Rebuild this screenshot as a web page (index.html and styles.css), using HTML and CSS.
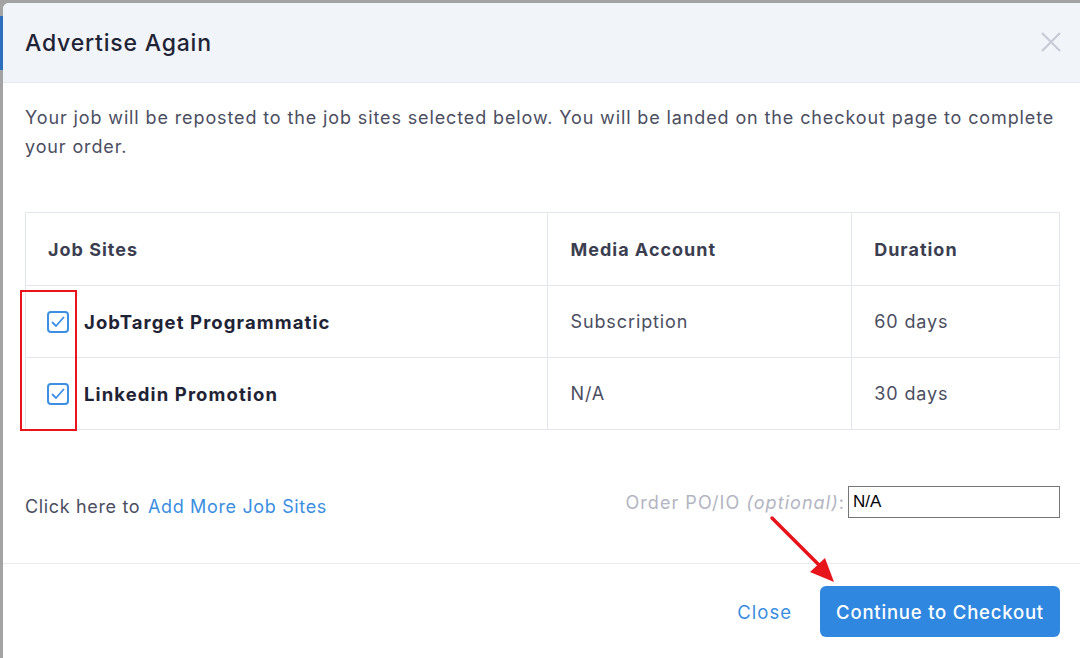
FILE: index.html
```html
<!DOCTYPE html>
<html>
<head>
<meta charset="utf-8">
<link rel="stylesheet" href="styles.css">
</head>
<body>
<div class="page-strip"></div>
<div class="modal">
  <div class="modal-header">
    <h2 class="modal-title">Advertise Again</h2>
    <span class="close-x">
      <svg width="22" height="22" viewBox="0 0 22 22"><path d="M2 2 L20 20 M20 2 L2 20" stroke="#c8cad6" stroke-width="2.2" fill="none"/></svg>
    </span>
  </div>
  <div class="modal-body">
    <p class="intro">Your job will be reposted to the job sites selected below. You will be landed on the checkout page to complete your order.</p>
    <table class="sites">
      <thead>
        <tr><th class="c1">Job Sites</th><th class="c2">Media Account</th><th class="c3">Duration</th></tr>
      </thead>
      <tbody>
        <tr>
          <td class="c1"><div class="site"><span class="cb"><svg width="18" height="18" viewBox="0 0 18 18"><path d="M3.5 9.5 L7 13 L14.5 4.5" stroke="#3d8fe4" stroke-width="1.8" fill="none" stroke-linecap="round" stroke-linejoin="round"/></svg></span><span class="site-name">JobTarget Programmatic</span></div></td>
          <td class="c2">Subscription</td>
          <td class="c3">60 days</td>
        </tr>
        <tr>
          <td class="c1"><div class="site"><span class="cb"><svg width="18" height="18" viewBox="0 0 18 18"><path d="M3.5 9.5 L7 13 L14.5 4.5" stroke="#3d8fe4" stroke-width="1.8" fill="none" stroke-linecap="round" stroke-linejoin="round"/></svg></span><span class="site-name">Linkedin Promotion</span></div></td>
          <td class="c2">N/A</td>
          <td class="c3">30 days</td>
        </tr>
      </tbody>
    </table>
    <div class="extra">
      <div class="add-more">Click here to <a class="link">Add More Job Sites</a></div>
      <div class="po"><label class="po-label">Order PO/IO <em>(optional)</em>:</label><input class="po-input" type="text" value="N/A"></div>
    </div>
  </div>
  <div class="modal-footer">
    <a class="close-link">Close</a>
    <button class="btn-primary">Continue to Checkout</button>
  </div>
</div>
<div class="red-box"></div>
<svg class="arrow" width="80" height="80" viewBox="0 0 80 80">
  <line x1="4" y1="4" x2="52" y2="52" stroke="#e8141c" stroke-width="3.5" stroke-linecap="round"/>
  <polygon points="66,68 42,58 57,44" fill="#e8141c"/>
</svg>
</body>
</html>
```
FILE: styles.css
```css
html, body {
  margin: 0;
  padding: 0;
}
body {
  width: 1080px;
  height: 658px;
  overflow: hidden;
  background: #a3a3a3;
  font-family: Inter, "Open Sans", sans-serif;
  position: relative;
}
.page-strip {
  position: absolute;
  left: 0;
  top: 16px;
  width: 3px;
  height: 54px;
  background: #2d6fbf;
}
.modal {
  margin: 3px 0 0 3px;
  width: 1077px;
  height: 655px;
  overflow: hidden;
  background: #ffffff;
  border-radius: 6px 0 0 0;
}
.modal-header {
  height: 79px;
  background: #f1f4f8;
  border-bottom: 1px solid #e6e9f0;
  display: flex;
  align-items: center;
  justify-content: space-between;
  padding: 0 18px 0 22px;
}
.modal-title {
  margin: 0;
  font-size: 23px;
  font-weight: 500;
  color: #1f2336;
  letter-spacing: 0.8px;
}
.close-x {
  display: flex;
  margin-top: -2px;
}
.modal-body {
  padding: 20px 20px 0 22px;
  height: 481px;
  border-bottom: 1px solid #e8eaf0;
  box-sizing: border-box;
}
.intro {
  margin: 0;
  font-size: 18px;
  line-height: 29px;
  color: #4b4e5f;
  letter-spacing: 0.88px;
}
.sites {
  margin-top: 51px;
  width: 1035px;
  border-collapse: collapse;
  border: 1px solid #e4e6ef;
  font-size: 18px;
}
.sites th, .sites td {
  border: 1px solid #e4e6ef;
  text-align: left;
  padding: 0 0 0 22px;
  height: 72px;
  box-sizing: border-box;
}
.sites th {
  font-weight: 700;
  color: #3b3e50;
  height: 73px;
  letter-spacing: 1px;
}
.sites td {
  color: #4b4e5f;
  letter-spacing: 0.9px;
}
.c1 { width: 523px; }
.c2 { width: 304px; }
.c3 { width: 208px; }
.sites td.c1 {
  padding-left: 21px;
}
.site {
  display: flex;
  align-items: center;
  gap: 15px;
}
.cb {
  width: 22px;
  height: 22px;
  box-sizing: border-box;
  border: 2px solid #3d8fe4;
  border-radius: 4px;
  display: flex;
  align-items: center;
  justify-content: center;
}
.site-name {
  font-weight: 700;
  font-size: 18.5px;
  color: #1f2336;
  letter-spacing: 1.1px;
}
.extra {
  display: flex;
  justify-content: space-between;
  align-items: center;
  margin-top: 56px;
}
.add-more {
  font-size: 18px;
  color: #4b4e5f;
  margin-top: 8px;
  letter-spacing: 0.65px;
}
.link {
  color: #3a8ee0;
  margin-left: 2px;
}
.po {
  display: flex;
  align-items: center;
}
.po-label {
  font-size: 18px;
  color: #b3b5c2;
  margin-right: 3px;
  letter-spacing: 1.05px;
}
.po-input {
  width: 212px;
  height: 32px;
  box-sizing: border-box;
  border: 1px solid #767676;
  padding: 0 4px;
  font-family: "Liberation Sans", Arial, sans-serif;
  font-size: 17px;
  color: #000;
  margin: 0;
}
.modal-footer {
  display: flex;
  justify-content: flex-end;
  align-items: center;
  padding: 22px 20px 0 0;
  gap: 28px;
}
.close-link {
  font-size: 18.5px;
  color: #3a8ee0;
  letter-spacing: 1px;
}
.btn-primary {
  width: 240px;
  height: 51px;
  border: none;
  border-radius: 6px;
  background: #2f87df;
  color: #ffffff;
  font-family: Inter, "Open Sans", sans-serif;
  font-size: 18.5px;
  font-weight: 500;
  letter-spacing: 0.8px;
}
.red-box {
  position: absolute;
  left: 20px;
  top: 290px;
  width: 53px;
  height: 137px;
  border: 2px solid #e8141c;
}
.arrow {
  position: absolute;
  left: 768px;
  top: 514px;
}
```
